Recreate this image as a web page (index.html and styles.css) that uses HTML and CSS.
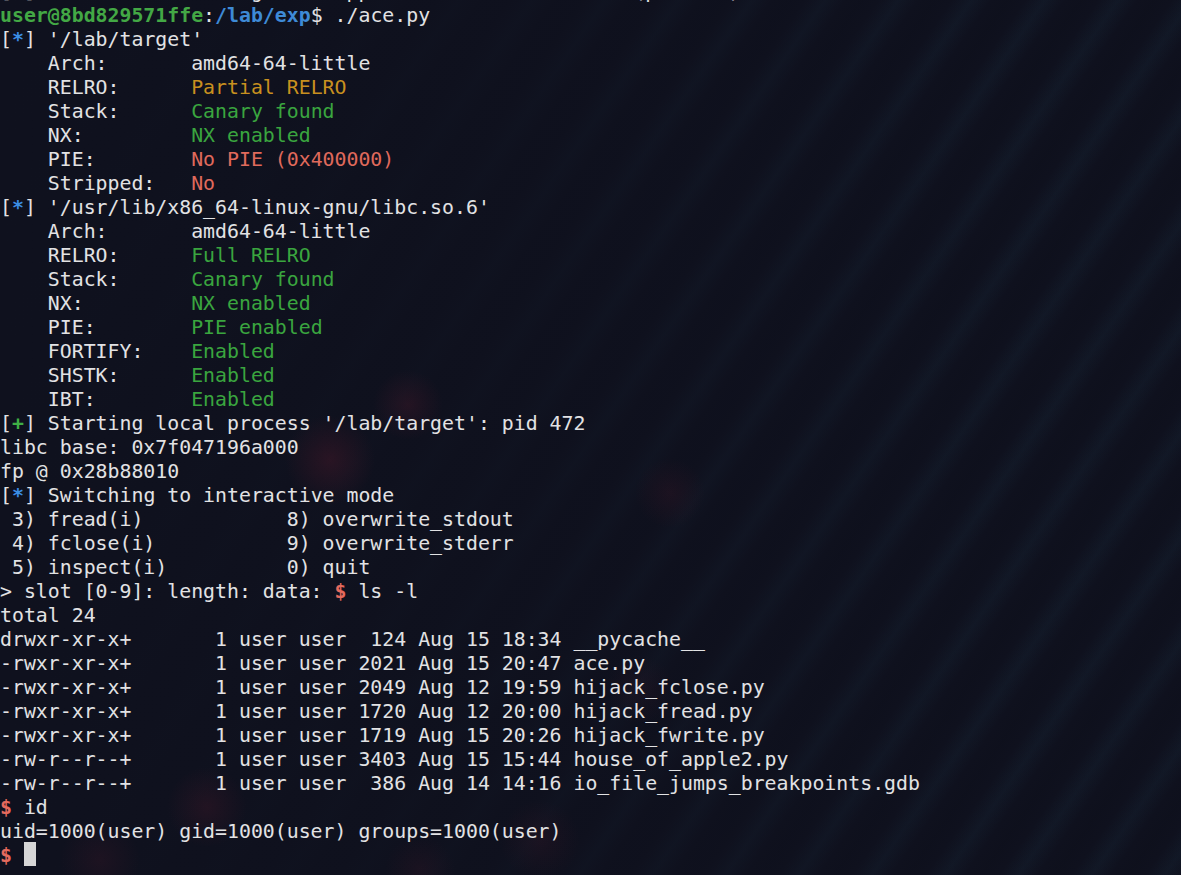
FILE: index.html
```html
<!DOCTYPE html>
<html>
<head>
<meta charset="utf-8">
<title>Terminal</title>
<link rel="stylesheet" href="styles.css">
</head>
<body>
<pre class="term"><div class="line cut">[*] Process '/lab/target' stopped with exit code -11 (pid 466)</div><div class="line"><span class="host">user@8bd829571ffe</span>:<span class="path">/lab/exp</span>$ ./ace.py</div><div class="line">[<span class="star">*</span>] '/lab/target'</div><div class="line">    Arch:       amd64-64-little</div><div class="line">    RELRO:      <span class="warn">Partial RELRO</span></div><div class="line">    Stack:      <span class="ok">Canary found</span></div><div class="line">    NX:         <span class="ok">NX enabled</span></div><div class="line">    PIE:        <span class="bad">No PIE (0x400000)</span></div><div class="line">    Stripped:   <span class="bad">No</span></div><div class="line">[<span class="star">*</span>] '/usr/lib/x86_64-linux-gnu/libc.so.6'</div><div class="line">    Arch:       amd64-64-little</div><div class="line">    RELRO:      <span class="ok">Full RELRO</span></div><div class="line">    Stack:      <span class="ok">Canary found</span></div><div class="line">    NX:         <span class="ok">NX enabled</span></div><div class="line">    PIE:        <span class="ok">PIE enabled</span></div><div class="line">    FORTIFY:    <span class="ok">Enabled</span></div><div class="line">    SHSTK:      <span class="ok">Enabled</span></div><div class="line">    IBT:        <span class="ok">Enabled</span></div><div class="line">[<span class="plus">+</span>] Starting local process '/lab/target': pid 472</div><div class="line">libc base: 0x7f047196a000</div><div class="line">fp @ 0x28b88010</div><div class="line">[<span class="star">*</span>] Switching to interactive mode</div><div class="line"> 3) fread(i)            8) overwrite_stdout</div><div class="line"> 4) fclose(i)           9) overwrite_stderr</div><div class="line"> 5) inspect(i)          0) quit</div><div class="line">&gt; slot [0-9]: length: data: <span class="dollar">$</span> ls -l</div><div class="line">total 24</div><div class="line">drwxr-xr-x+       1 user user  124 Aug 15 18:34 __pycache__</div><div class="line">-rwxr-xr-x+       1 user user 2021 Aug 15 20:47 ace.py</div><div class="line">-rwxr-xr-x+       1 user user 2049 Aug 12 19:59 hijack_fclose.py</div><div class="line">-rwxr-xr-x+       1 user user 1720 Aug 12 20:00 hijack_fread.py</div><div class="line">-rwxr-xr-x+       1 user user 1719 Aug 15 20:26 hijack_fwrite.py</div><div class="line">-rw-r--r--+       1 user user 3403 Aug 15 15:44 house_of_apple2.py</div><div class="line">-rw-r--r--+       1 user user  386 Aug 14 14:16 io_file_jumps_breakpoints.gdb</div><div class="line"><span class="dollar">$</span> id</div><div class="line">uid=1000(user) gid=1000(user) groups=1000(user)</div><div class="line"><span class="dollar">$</span> <span class="cursor"> </span></div></pre>
</body>
</html>
```

FILE: styles.css
```css
html, body {
  margin: 0;
  padding: 0;
  height: 100%;
  overflow: hidden;
}

body {
  background-color: #0f111e;
  background-image:
    radial-gradient(circle at 330px 460px, rgba(110, 30, 50, 0.28) 0, rgba(110, 30, 50, 0) 45px),
    radial-gradient(circle at 408px 405px, rgba(110, 30, 50, 0.22) 0, rgba(110, 30, 50, 0) 35px),
    radial-gradient(circle at 670px 493px, rgba(110, 30, 50, 0.14) 0, rgba(110, 30, 50, 0) 35px),
    radial-gradient(circle at 207px 807px, rgba(110, 30, 50, 0.2) 0, rgba(110, 30, 50, 0) 40px),
    radial-gradient(circle at 100px 860px, rgba(110, 30, 50, 0.15) 0, rgba(110, 30, 50, 0) 40px),
    radial-gradient(circle at 540px 840px, rgba(110, 30, 50, 0.12) 0, rgba(110, 30, 50, 0) 40px),
    radial-gradient(circle at 420px 870px, rgba(110, 30, 50, 0.12) 0, rgba(110, 30, 50, 0) 35px),
    radial-gradient(circle at 640px 690px, rgba(110, 30, 50, 0.1) 0, rgba(110, 30, 50, 0) 35px),
    linear-gradient(to right, #0f111e 0%, rgba(15, 17, 30, 0.85) 40%, rgba(15, 17, 30, 0.1) 85%),
    repeating-linear-gradient(125deg,
      rgba(20, 30, 45, 0) 0px,
      rgba(20, 30, 45, 0.6) 16px,
      rgba(20, 30, 45, 0) 32px,
      rgba(13, 15, 26, 0.35) 46px,
      rgba(20, 30, 45, 0) 60px);
}

.term {
  margin: 0;
  padding: 4px 0 0 0;
  font-family: "DejaVu Sans Mono", "Liberation Mono", monospace;
  font-size: 19.85px;
  line-height: 24px;
  color: #e2e2e4;
  white-space: pre;
}

.line {
  height: 24px;
}

.cut {
  margin-top: -24px;
}

.host {
  color: #43a845;
  font-weight: bold;
}

.path {
  color: #3e8ad6;
  font-weight: bold;
}

.star {
  color: #3b8ee6;
  font-weight: bold;
}

.plus {
  color: #3fae45;
  font-weight: bold;
}

.ok {
  color: #3aa53f;
}

.warn {
  color: #c8901f;
}

.bad {
  color: #e06a5c;
}

.dollar {
  color: #e46a5d;
  font-weight: bold;
}

.cursor {
  display: inline-block;
  width: 12px;
  height: 24px;
  vertical-align: top;
  margin-top: -2px;
  background: #d6d6d6;
}
```
